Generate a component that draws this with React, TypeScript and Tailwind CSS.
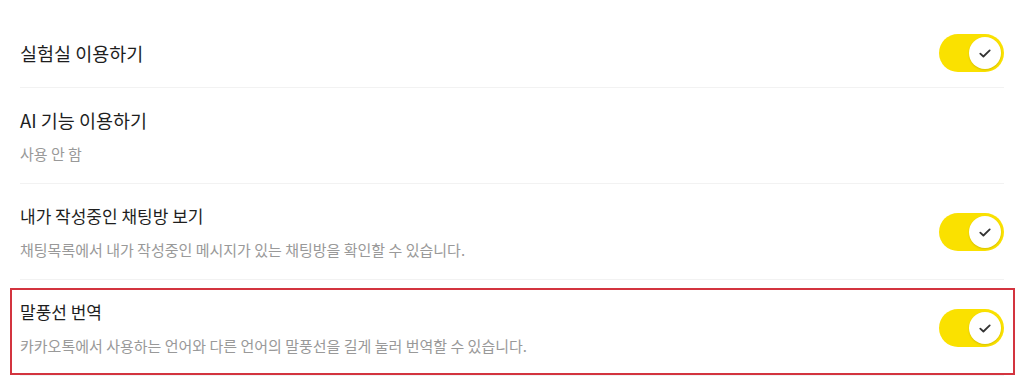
const font = { fontFamily: '"Noto Sans CJK KR", "Noto Sans", sans-serif' };

function Toggle() {
  return (
    <div className="relative w-[65px] h-[38px] shrink-0 rounded-full bg-[#fae100]">
      <div className="absolute right-[3px] top-[3px] w-8 h-8 rounded-full bg-white shadow-[0_1px_2px_rgba(0,0,0,0.15)] flex items-center justify-center">
        <svg width="12" height="9" viewBox="0 0 12 9" fill="none">
          <path d="M1.3 4.6 L4.4 7.5 L10.7 1.4" stroke="#333" strokeWidth="1.8" strokeLinecap="round" strokeLinejoin="round" />
        </svg>
      </div>
    </div>
  );
}

interface RowProps {
  title: string;
  desc?: string;
  toggle?: boolean;
  big?: boolean;
}

function Row({ title, desc, toggle, big }: RowProps) {
  return (
    <div className="flex items-center justify-between border-b border-[#f2f2f2] pt-5 pb-[19px]">
      <div>
        <div className={big ? "text-[18.5px] leading-6 text-[#1e1e1e]" : "text-[17px] leading-6 text-[#1e1e1e]"}>
          {title}
        </div>
        {desc && <div className="mt-3 text-[15px] leading-5 text-[#999]">{desc}</div>}
      </div>
      {toggle && <Toggle />}
    </div>
  );
}

export default function App() {
  return (
    <div className="w-[1024px] h-[380px] bg-white overflow-hidden px-5" style={font}>
      <div className="flex items-center justify-between border-b border-[#f2f2f2] pt-[34px] pb-[15px]">
        <div className="text-[18.5px] leading-6 text-[#1e1e1e]">실험실 이용하기</div>
        <Toggle />
      </div>
      <Row title="AI 기능 이용하기" desc="사용 안 함" big />
      <Row
        title="내가 작성중인 채팅방 보기"
        desc="채팅목록에서 내가 작성중인 메시지가 있는 채팅방을 확인할 수 있습니다."
        toggle
      />
      <div className="relative">
        <Row
          title="말풍선 번역"
          desc="카카오톡에서 사용하는 언어와 다른 언어의 말풍선을 길게 눌러 번역할 수 있습니다."
          toggle
        />
        <div className="absolute left-[-10px] right-[-11px] top-2 bottom-[1px] border-2 border-[#d3343f] pointer-events-none" />
      </div>
    </div>
  );
}
